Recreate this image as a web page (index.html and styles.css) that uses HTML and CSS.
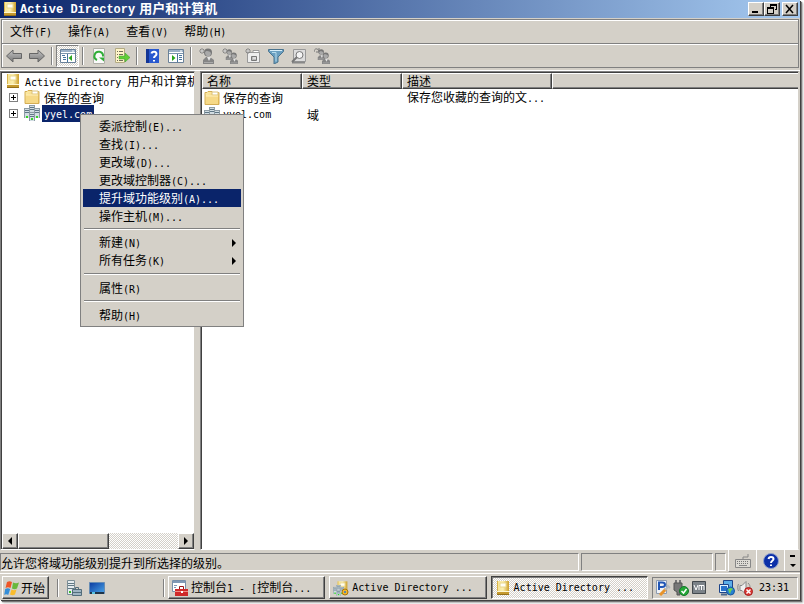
FILE: index.html
```html
<!DOCTYPE html>
<html lang="zh-CN">
<head>
<meta charset="utf-8">
<meta name="viewport" content="width=device-width, initial-scale=1">
<title>Active Directory 用户和计算机</title>
<link rel="stylesheet" href="styles.css">
</head>
<body>
<svg class="defs" aria-hidden="true">
  <defs>
    <linearGradient id="gold" x2="1"><stop offset="0" stop-color="#f7e391"/><stop offset=".5" stop-color="#fbefb0"/><stop offset="1" stop-color="#cda02c"/></linearGradient>
    <linearGradient id="folderfill" x2="1" y2="1"><stop offset="0" stop-color="#fff0b0"/><stop offset="1" stop-color="#e8b94c"/></linearGradient>
    <linearGradient id="greyarrow" x2="0" y2="1"><stop offset="0" stop-color="#c4c4c4"/><stop offset="1" stop-color="#777"/></linearGradient>
    <linearGradient id="bluefill" x2="1" y2="1"><stop offset="0" stop-color="#0c3ba0"/><stop offset="1" stop-color="#4aa5e8"/></linearGradient>
    <symbol id="book" viewBox="0 0 16 16"><path d="M2 1h12v14H2z" fill="url(#gold)"/><path d="M2.500 1v14" stroke="#d9b54c"/><path d="M2 11.500h12" stroke="#fff8d0"/><path d="M2 12h12v3H2z" fill="#c69a2e"/><path d="M2 14.500h12" stroke="#94701a"/><path d="M5 3h6v4H5z" fill="#fffef4" stroke="#e9d68a"/></symbol>
    <symbol id="folder" viewBox="0 0 16 16"><path d="M1 14.500V2.500h2l1-1h4l1 1h6v12z" fill="url(#folderfill)" stroke="#d4ae55"/><path d="M8 2h6v3H8z" fill="#fff" stroke="#dcc27b"/><path d="M2 6h12v8H2z" fill="#f6d987"/><path d="M2 6h12" stroke="#fff0bb"/></symbol>
    <symbol id="domain" viewBox="0 0 16 16"><g fill="#d2dde3"><path d="M5 0h6v9H5zM0 3h5v10H0zM11 3h5v10h-5zM5 7h6v9H5z"/></g><path d="M5.500 0v16M10.500 0v16M.5 3v10M15.500 3v10M5 7.500h6M0 3.500h5M11 3.500h5M5 .5h6" stroke="#8d9ca5"/><path d="M6 2.500h4M1 5.500h4M11 5.500h4M1 7.500h4M11 7.500h4M6 9.500h4M6 4.500h4M6 11.500h4" stroke="#5f7786"/><path d="M2 11h2v2H2zM12 11h2v2h-2zM7 13h2v2H7z" fill="#35d425"/></symbol>
    <symbol id="back" viewBox="0 0 16 16"><path d="M.5 8 7 2v3.500h8.500v5H7V14z" fill="url(#greyarrow)" stroke="#666"/></symbol>
    <symbol id="panel" viewBox="0 0 16 16"><path d="M.5 1.500h15v13H.5z" fill="#fff" stroke="#6a8199"/><path d="M1 2h14v2H1z" fill="#9bb1c7"/><path d="M1 5.500h14" stroke="#7b95ae"/><path d="M12 3h2" stroke="#fff"/></symbol>
    <symbol id="tree" viewBox="0 0 16 16"><use href="#panel"/><path d="M7.500 6v8M2 7.500h3M3 9.500h3M3 11.500h3" stroke="#47749d"/><path d="M12 7v6L8.500 10z" fill="#28a51d"/></symbol>
    <symbol id="action" viewBox="0 0 16 16"><use href="#panel"/><path d="M9.500 6v8M11 7.500h3M11 9.500h3M11 11.500h3" stroke="#47749d"/><path d="M4 7v6l3.500-3z" fill="#28a51d"/></symbol>
    <symbol id="refresh" viewBox="0 0 16 16"><path d="M2.500.5h11v15h-11z" fill="#fafafa" stroke="#b0b0a8"/><path d="M6 12a4.300 4.300 0 1 1 6-3.500" fill="none" stroke="#31ad37" stroke-width="2"/><path d="M8 9.500h5v4z" fill="#31ad37"/></symbol>
    <symbol id="export" viewBox="0 0 16 16"><path d="M1.500.5h9v14h-9z" fill="#fff5c8" stroke="#b3aa83"/><path d="M3 3.500h1M5 3.500h4M3 6.500h1M5 6.500h4M3 9.500h1M3 12.500h1M5 12.500h4" stroke="#706d5b"/><path d="M5 8h6V5l5 4.500-5 4.500v-3H5z" fill="#61ce38" stroke="#3ba12c" stroke-width=".5"/></symbol>
    <symbol id="help" viewBox="0 0 16 16"><path d="M1 1h13v14H1z" fill="#2858cf"/><path d="M1 1h3v14H1z" fill="#143594"/><path d="M6.500 5.500C7 3 11.500 3 11.500 6c0 2-2.500 2-2.500 4M9 12v1.500" fill="none" stroke="#fff" stroke-width="2"/></symbol>
    <symbol id="person" viewBox="0 0 16 16"><circle cx="9" cy="4.500" r="4" fill="#777"/><path d="M6 5c0-3 5-2 6 0 0 4-5 5-6 0" fill="#a9a9a9"/><path d="M4 16v-4l3-3h4l4 3v4z" fill="#858585"/><path d="m8 9 2 4 2-4" fill="#e4e4e4"/><path d="M5 14.500h9" stroke="#aaa"/></symbol>
    <symbol id="spark" viewBox="0 0 16 16"><path d="M3 0v6M0 3h6M1 1l4 4M5 1 1 5" stroke="#888"/><circle cx="3" cy="3" r="1" fill="#ddd"/></symbol>
    <symbol id="user" viewBox="0 0 16 16"><use href="#person"/><use href="#spark"/></symbol>
    <symbol id="pair" viewBox="0 0 16 16"><use href="#person" x="1" y="1" width="11" height="11"/><use href="#person" x="5" y="4" width="12" height="12"/></symbol>
    <symbol id="group" viewBox="0 0 16 16"><use href="#pair"/><use href="#spark"/></symbol>
    <symbol id="unit" viewBox="0 0 16 16"><path d="M2.500 4.500h12v10h-12z" fill="#eee" stroke="#999"/><path d="M8 2.500h6v2H8z" fill="#fff" stroke="#999"/><path d="M6.500 8.500h5v4h-5z" fill="#bbb" stroke="#777"/><path d="M8 10h3" stroke="#fff"/><use href="#spark"/></symbol>
    <symbol id="filter" viewBox="0 0 16 16"><path d="M.5 1.500h15v2L10 9v5l-4 2V9L.5 3.500z" fill="#6b9fc0" stroke="#4b748f"/><path d="M2 2.500h12" stroke="#d9eef9"/><path d="M4 4.500h4v9" stroke="#b9dcec" fill="none"/></symbol>
    <symbol id="find" viewBox="0 0 16 16"><path d="M2.500 1.500h12v12h-12z" fill="#ddd" stroke="#999"/><path d="M1 14.500h13" stroke="#888" stroke-width="2"/><circle cx="8.500" cy="7" r="3.500" fill="#f4f4f4" stroke="#777"/><path d="m6 9-5 5" stroke="#777" stroke-width="2"/></symbol>
    <symbol id="addgroup" viewBox="0 0 16 16"><use href="#pair"/><path d="M0 4c0-4 4-4 5-1M5 0v4H2" fill="none" stroke="#777"/></symbol>
    <symbol id="flag" viewBox="0 0 16 16"><path d="M3 2c2-1 3-1 5 0L6.500 8c-2-1-3-1-5 0z" fill="#ef5527"/><path d="M9 2.500c2 1 4 1 6 0l-2 6c-2 1-3 1-5 0z" fill="#69b83c"/><path d="M1.200 9c2-1 3-1 5 0l-2 6c-1-1-3-1-4 0z" fill="#358ed8"/><path d="M7.500 9.500c2 1 3 1 5 0l-1.500 5c-2 1-3 1-5 0z" fill="#f9bc2c"/></symbol>
    <symbol id="server" viewBox="0 0 16 16"><path d="M1.500.5h7v14h-7z" fill="#e6ecef" stroke="#7c8e96"/><path d="M2 3.500h6M2 5.500h6M2 8.500h6" stroke="#607883"/><path d="M3 11h2v2H3z" fill="#35bd25"/><path d="M6.500 9.500h9v6h-9z" fill="#9eb4c2" stroke="#536d7b"/><path d="M9.500 9V7.500h3V9M7 12.500h8" fill="none" stroke="#536d7b"/></symbol>
    <symbol id="desktop" viewBox="0 0 16 16"><path d="M.5 2.500h15v11H.5z" fill="url(#bluefill)" stroke="#678db5"/><path d="M1 12h14v2H1z" fill="#203449"/><path d="M3 12h3v2H3z" fill="#59c3e2"/></symbol>
    <symbol id="toolbox" viewBox="0 0 16 16"><path d="M.5.5h13v11H.5z" fill="#fff" stroke="#7890aa"/><path d="M1 2h12" stroke="#8099b5" stroke-width="2"/><path d="M2 5.500h3M2 7.500h2" stroke="#8099b5"/><path d="M3 9h13v7H3z" fill="#cf2929"/><path d="M7.500 9V6.500h4V9" fill="none" stroke="#9c1717"/><path d="M3 11.500h13" stroke="#f28c84"/><path d="M9 11h2v2H9z" fill="#fff"/></symbol>
    <symbol id="adbook" viewBox="0 0 16 16"><use href="#book" x="3" width="13" height="14"/><use href="#domain" y="5" width="11" height="11"/><circle cx="12" cy="12" r="3" fill="#f2b62c" stroke="#a97609"/><circle cx="12" cy="12" r="1" fill="#287ad0"/></symbol>
    <symbol id="keyboard" viewBox="0 0 16 16"><path d="M.5 6.500h15v8H.5z" fill="#dddbd5" stroke="#888"/><path d="M2 8.500h12M2 10.500h12" stroke="#777" stroke-dasharray="1 1"/><path d="M4 12.500h8M8 6V4h5V1" fill="none" stroke="#888"/></symbol>
    <symbol id="roundhelp" viewBox="0 0 16 16"><circle cx="8" cy="8" r="7.500" fill="#0b2fa8" stroke="#8fa0cb"/><path d="M5.500 6C6 3 10.500 3.500 10.500 6c0 2-2.500 1.500-2.500 4M8 11.500v1.500" fill="none" stroke="#fff" stroke-width="2"/></symbol>
    <symbol id="pen" viewBox="0 0 16 16"><path d="M1.500.5h10v13h-10z" fill="#eef2f8" stroke="#8c9bb0"/><path d="M4 10V2.500h3c4 0 4 4.500 0 4.500H5" fill="none" stroke="#2055b5" stroke-width="2"/><path d="m5 15 6-6" stroke="#e8942b" stroke-width="3"/><path d="m10 10 4-4M12 5l3 3" stroke="#b5b9bd" stroke-width="2"/></symbol>
    <symbol id="usb" viewBox="0 0 16 16"><path d="M3 0v4M7 0v4" stroke="#777" stroke-width="2"/><path d="M1 3h8v7l-2 2v3H4v-3l-3-2z" fill="#777" stroke="#555"/><circle cx="11" cy="11" r="4.500" fill="#25a836" stroke="#14752b"/><path d="m8.500 11 2 2 3-4" fill="none" stroke="#fff" stroke-width="1.500"/></symbol>
    <symbol id="vm" viewBox="0 0 16 16"><path d="M1.500 1.500h13v12h-13z" fill="#7b8288" stroke="#42484d"/><path d="m3 5 2 5 2-5M8 10V5.500h5V10M10.500 6v4" fill="none" stroke="#fff"/></symbol>
    <symbol id="network" viewBox="0 0 16 16"><path d="M4.500.5h9v8h-9z" fill="#5baee9" stroke="#1d4489"/><path d="M.5 4.500h9v8h-9z" fill="#e0f2ff" stroke="#1d4489"/><path d="M2 6h6v5H2z" fill="#2872cc"/><path d="M2 14.500h6" stroke="#4c698c" stroke-width="2"/><circle cx="11.500" cy="11" r="4" fill="#2681d2" stroke="#17569d"/><path d="m9 9 3-1 2 1-2 2-1 3-1-2z" fill="#6ed452"/></symbol>
    <symbol id="sound" viewBox="0 0 16 16"><path d="M3 5.500h2l4-4v13l-4-4H3z" fill="#f0f0f0" stroke="#888"/><path d="M1.500 4c-1 2-1 5 0 7M11 3c2 2 2 3 2 5" fill="none" stroke="#888"/><circle cx="11.500" cy="11.500" r="4" fill="#db3732" stroke="#a91d1d"/><path d="m9.500 9.500 4 4m0-4-4 4" stroke="#fff" stroke-width="1.500"/></symbol>
  </defs>
</svg>

<div class="window">
  <header class="titlebar">
    <svg class="icon"><use href="#book"/></svg>
    <h1><span class="latin">Active Directory</span><span>用户和计算机</span></h1>
    <div class="captions">
      <button type="button" aria-label="最小化"><svg viewBox="0 0 12 10"><path d="M2 7h6v2H2z"/></svg></button>
      <button type="button" aria-label="还原"><svg viewBox="0 0 12 10"><path d="M4 0h7v6H9V5h1V2H5v1H4zM1 3h7v7H1zm1 2v4h5V5z" fill-rule="evenodd"/></svg></button>
      <button type="button" class="close" aria-label="关闭"><svg viewBox="0 0 12 10"><path d="m2 1 7 8M9 1 2 9" stroke="#000" stroke-width="1.500"/></svg></button>
    </div>
  </header>

  <nav class="menubar">
    <button type="button">文件<span class="latin">(F)</span></button>
    <button type="button">操作<span class="latin">(A)</span></button>
    <button type="button">查看<span class="latin">(V)</span></button>
    <button type="button">帮助<span class="latin">(H)</span></button>
  </nav>

  <div class="toolbar">
    <button type="button" aria-label="后退"><svg class="icon"><use href="#back"/></svg></button>
    <button type="button" aria-label="前进"><svg class="icon flip"><use href="#back"/></svg></button>
    <i class="divider"></i>
    <button type="button" class="pressed" aria-label="显示控制台树"><svg class="icon"><use href="#tree"/></svg></button>
    <i class="divider"></i>
    <button type="button" aria-label="刷新"><svg class="icon"><use href="#refresh"/></svg></button>
    <button type="button" aria-label="导出列表"><svg class="icon"><use href="#export"/></svg></button>
    <i class="divider"></i>
    <button type="button" aria-label="帮助"><svg class="icon"><use href="#help"/></svg></button>
    <button type="button" aria-label="操作窗格"><svg class="icon"><use href="#action"/></svg></button>
    <i class="divider"></i>
    <button type="button" aria-label="新建用户"><svg class="icon"><use href="#user"/></svg></button>
    <button type="button" aria-label="新建组"><svg class="icon"><use href="#group"/></svg></button>
    <button type="button" aria-label="新建组织单位"><svg class="icon"><use href="#unit"/></svg></button>
    <button type="button" aria-label="筛选"><svg class="icon"><use href="#filter"/></svg></button>
    <button type="button" aria-label="查找"><svg class="icon"><use href="#find"/></svg></button>
    <button type="button" aria-label="添加到组"><svg class="icon"><use href="#addgroup"/></svg></button>
  </div>

  <main class="panes">
    <section class="treepane">
      <ul class="tree">
        <li><svg class="icon"><use href="#book"/></svg><span class="label"><span class="latin">Active Directory </span>用户和计算机</span></li>
        <li class="child"><button type="button" class="expand" aria-label="展开"></button><svg class="icon"><use href="#folder"/></svg><span class="label">保存的查询</span></li>
        <li class="child"><button type="button" class="expand" aria-label="展开"></button><svg class="icon"><use href="#domain"/></svg><span class="label selected"><span class="latin">yyel.com</span></span></li>
      </ul>
      <div class="scrollbar">
        <button type="button" aria-label="向左滚动"><svg viewBox="0 0 8 8"><path d="M6 0v8L2 4z"/></svg></button>
        <div class="track"><div class="thumb"></div></div>
        <button type="button" aria-label="向右滚动"><svg viewBox="0 0 8 8"><path d="M2 0v8l4-4z"/></svg></button>
      </div>
    </section>
    <section class="listpane">
      <table>
        <colgroup><col class="name"><col class="type"><col class="desc"><col></colgroup>
        <thead><tr><th>名称</th><th>类型</th><th>描述</th><th></th></tr></thead>
        <tbody>
          <tr><td><span class="cell"><svg class="icon"><use href="#folder"/></svg>保存的查询</span></td><td></td><td>保存您收藏的查询的文<span class="latin">...</span></td><td></td></tr>
          <tr><td><span class="cell"><svg class="icon"><use href="#domain"/></svg><span class="latin">yyel.com</span></span></td><td>域</td><td></td><td></td></tr>
        </tbody>
      </table>
    </section>
  </main>

  <div class="statusbar">
    <div class="field message">允许您将域功能级别提升到所选择的级别。</div>
    <div class="field middle"></div>
    <div class="field small"></div>
    <div class="langbar">
      <button type="button" aria-label="键盘"><svg class="icon"><use href="#keyboard"/></svg></button>
      <button type="button" aria-label="帮助"><svg class="icon"><use href="#roundhelp"/></svg></button>
      <button type="button" class="options" aria-label="选项"><svg viewBox="0 0 6 14"><path d="M0 1h5v2H0zM0 10h6l-3 3z"/></svg></button>
    </div>
  </div>

  <footer class="taskbar">
    <button type="button" class="start"><svg class="icon"><use href="#flag"/></svg>开始</button>
    <div class="quick">
      <button type="button" aria-label="服务器管理器"><svg class="icon"><use href="#server"/></svg></button>
      <button type="button" aria-label="显示桌面"><svg class="icon"><use href="#desktop"/></svg></button>
    </div>
    <div class="tasks">
      <button type="button"><svg class="icon"><use href="#toolbox"/></svg><span>控制台<span class="latin">1 - [</span>控制台<span class="latin">...</span></span></button>
      <button type="button"><svg class="icon"><use href="#adbook"/></svg><span class="latin">Active Directory ...</span></button>
      <button type="button" class="active"><svg class="icon"><use href="#book"/></svg><span class="latin">Active Directory ...</span></button>
    </div>
    <div class="tray">
      <svg class="icon"><use href="#pen"/></svg>
      <svg class="icon"><use href="#usb"/></svg>
      <svg class="icon"><use href="#vm"/></svg>
      <svg class="icon net"><use href="#network"/></svg>
      <svg class="icon"><use href="#sound"/></svg>
      <time class="latin">23:31</time>
    </div>
  </footer>

  <div class="context" role="menu">
    <button type="button" role="menuitem">委派控制<span class="latin">(E)...</span></button>
    <button type="button" role="menuitem">查找<span class="latin">(I)...</span></button>
    <button type="button" role="menuitem">更改域<span class="latin">(D)...</span></button>
    <button type="button" role="menuitem">更改域控制器<span class="latin">(C)...</span></button>
    <button type="button" role="menuitem" class="current">提升域功能级别<span class="latin">(A)...</span></button>
    <button type="button" role="menuitem">操作主机<span class="latin">(M)...</span></button>
    <hr>
    <button type="button" role="menuitem" class="sub"><span>新建<span class="latin">(N)</span></span></button>
    <button type="button" role="menuitem" class="sub"><span>所有任务<span class="latin">(K)</span></span></button>
    <hr>
    <button type="button" role="menuitem">属性<span class="latin">(R)</span></button>
    <hr>
    <button type="button" role="menuitem">帮助<span class="latin">(H)</span></button>
  </div>
</div>
</body>
</html>
```
FILE: styles.css
```css
:root {
  --face: #d4d0c8;
  --shade: #808080;
  --dark: #404040;
  --navy: #0a246a;
  --checker: repeating-conic-gradient(#fff 0 25%, #d4d0c8 0 50%) 0 0 / 2px 2px;
}
* { box-sizing: border-box; }
body {
  margin: 0;
  padding: 0 4px 4px 0;
  min-height: 100vh;
  display: flex;
  background: #fff;
  color: #000;
  font: 12px/16px "Noto Sans CJK SC", sans-serif;
}
button {
  margin: 0;
  padding: 0;
  border: 0;
  background: none;
  color: inherit;
  font: inherit;
  white-space: nowrap;
}
svg { display: block; flex: none; }
.defs { position: absolute; width: 0; height: 0; }
.icon { width: 16px; height: 16px; }
.flip { transform: scaleX(-1); }
.latin { font-family: "DejaVu Sans Mono", monospace; font-size: 10px; white-space: pre; }
.window {
  position: relative;
  flex: 1;
  min-width: 0;
  display: flex;
  flex-direction: column;
  background: var(--face);
  box-shadow: 1px 1px 0 #404040, 2px 2px 1px #777, 3px 3px 2px #bbb;
}

/* Title */
.titlebar {
  display: flex;
  align-items: center;
  height: 18px;
  padding: 0 2px;
  background: linear-gradient(90deg, var(--navy), #a6caf0);
  color: #fff;
}
.titlebar h1 {
  flex: 1;
  display: flex;
  align-items: baseline;
  gap: 4px;
  margin: 0 0 0 2px;
  font-size: 13px;
  line-height: 18px;
}
.titlebar h1 .latin { font-family: "Liberation Mono", monospace; font-size: 12px; }
.captions { display: flex; }
.captions button {
  display: flex;
  align-items: center;
  justify-content: center;
  width: 16px;
  height: 14px;
}
.captions svg { width: 12px; height: 10px; }
.captions .close { margin-left: 2px; }
.captions button, .scrollbar button, .thumb {
  background: var(--face);
  border: 1px solid;
  border-color: #fff var(--dark) var(--dark) #fff;
  box-shadow: inset -1px -1px var(--shade);
}

/* Menu and tool bars */
.menubar, .toolbar {
  display: flex;
  align-items: center;
  margin: 0 1px;
  border: 1px solid var(--shade);
  box-shadow: inset 1px 1px #fff;
}
.menubar { height: 24px; margin-top: 1px; padding-left: 8px; gap: 16px; border-bottom: 0; }
.toolbar { height: 25px; padding-left: 0; }
.toolbar button { display: flex; align-items: center; justify-content: center; width: 23px; height: 22px; }
.toolbar .pressed { background: var(--checker); border: 1px solid; border-color: var(--shade) #fff #fff var(--shade); }
.divider { width: 2px; height: 18px; margin: 0 3px; border-left: 1px solid var(--shade); border-right: 1px solid #fff; }

/* Panes */
.panes {
  flex: 1;
  display: grid;
  grid-template-columns: 195px minmax(0, 1fr);
  gap: 5px;
  margin-top: 2px;
  border-top: 1px solid #fff;
}
.treepane, .listpane {
  min-width: 0;
  background: #fff;
  border: 1px solid;
  border-color: var(--shade) var(--face) #fff var(--shade);
  box-shadow: inset 1px 1px var(--dark);
  padding: 1px 0 0 1px;
}
.treepane { display: flex; flex-direction: column; overflow: hidden; }
.listpane { margin-right: 1px; }
.tree { flex: 1; list-style: none; margin: 0; padding: 0 0 0 3px; }
.tree li { display: flex; align-items: center; gap: 3px; height: 16px; white-space: nowrap; }
.tree .child { gap: 2px; padding-left: 4px; }
.child .icon { margin-left: 4px; }
.label { padding: 0 1px; line-height: 15px; }
.tree .child .label { padding: 0 2px; }
.label.selected { background: var(--navy); color: #fff; }
.expand {
  width: 9px;
  height: 9px;
  border: 1px solid var(--shade);
  background:
    linear-gradient(#000, #000) center / 5px 1px no-repeat,
    linear-gradient(#000, #000) center / 1px 5px no-repeat;
}
.scrollbar { display: flex; height: 16px; }
.scrollbar button { display: flex; align-items: center; justify-content: center; width: 16px; }
.scrollbar svg { width: 8px; height: 8px; }
.track { flex: 1; background: var(--checker); }
.thumb { width: 57%; height: 100%; }

table { width: 100%; border-collapse: separate; border-spacing: 0; table-layout: fixed; }
.name, .type { width: 100px; }
.desc { width: 150px; }
th {
  height: 16px;
  padding: 0 0 0 4px;
  background: var(--face);
  border: 1px solid;
  border-color: #fff var(--dark) var(--dark) #fff;
  box-shadow: inset -1px -1px var(--shade);
  font-weight: normal;
  line-height: 14px;
  text-align: left;
}
th:last-child { border-right: 0; box-shadow: inset 0 -1px var(--shade); }
td { height: 16px; padding: 0 0 0 5px; white-space: nowrap; line-height: 16px; vertical-align: middle; }
td:first-child { padding-left: 2px; }
.cell { display: flex; align-items: center; gap: 3px; height: 16px; }

/* Status */
.statusbar { display: flex; gap: 2px; height: 23px; border-bottom: 1px solid var(--face); }
.field { margin: 3px 0 1px; border: 1px solid; border-color: var(--shade) #fff #fff var(--shade); white-space: nowrap; line-height: 17px; }
.message { flex: 1; }
.middle { width: 132px; }
.small { width: 11px; }
.langbar { display: flex; width: 72px; border-left: 1px solid #fff; border-bottom: 1px solid var(--shade); }
.langbar button { display: flex; align-items: center; justify-content: center; width: 28px; border-right: 1px solid #fff; }
.langbar .options { width: 15px; border-right: 0; }
.options svg { width: 6px; height: 14px; }

/* Taskbar */
.taskbar { display: flex; align-items: center; height: 27px; padding: 1px 2px 0; border-top: 1px solid #fff; }
.start, .tasks button {
  display: flex;
  align-items: center;
  height: 23px;
  border: 1px solid;
  border-color: #fff var(--dark) var(--dark) #fff;
  box-shadow: inset -1px -1px var(--shade);
}
.start { width: 47px; padding-left: 1px; gap: 1px; }
.quick { display: flex; align-items: center; gap: 7px; width: 107px; height: 18px; margin: 0 4px 0 8px; padding-left: 8px; border: solid var(--shade); border-width: 0 1px; box-shadow: inset 1px 0 #fff, 1px 0 #fff; }
.tasks { flex: 1; display: flex; gap: 4px; min-width: 0; }
.tasks button { flex: 1; min-width: 0; gap: 3px; padding-left: 3px; overflow: hidden; }
.tasks .active { background: var(--checker); border-color: var(--dark) #fff #fff var(--dark); box-shadow: inset 1px 1px var(--shade); }
.tray { display: flex; align-items: center; gap: 2px; height: 22px; margin-left: 4px; padding: 0 8px 0 2px; border: 1px solid; border-color: var(--shade) #fff #fff var(--shade); }
.tray .net { margin-left: 10px; }
.tray time { margin-left: 4px; }

/* Shortcut menu */
.context {
  position: absolute;
  left: 80px;
  top: 114px;
  width: 164px;
  padding: 2px;
  background: var(--face);
  border: 1px solid var(--shade);
}
.context button { display: block; width: 100%; height: 18px; padding-left: 16px; line-height: 18px; text-align: left; }
.context .current { background: var(--navy); color: #fff; }
.context .sub { display: flex; align-items: center; }
.context .sub::after { content: ""; margin-left: auto; margin-right: 5px; border: solid transparent; border-width: 4px 0 4px 4px; border-left-color: #000; }
.context hr { height: 2px; margin: 3px 1px 4px; border: solid; border-width: 1px 0; border-color: var(--shade) transparent #fff; }
```
